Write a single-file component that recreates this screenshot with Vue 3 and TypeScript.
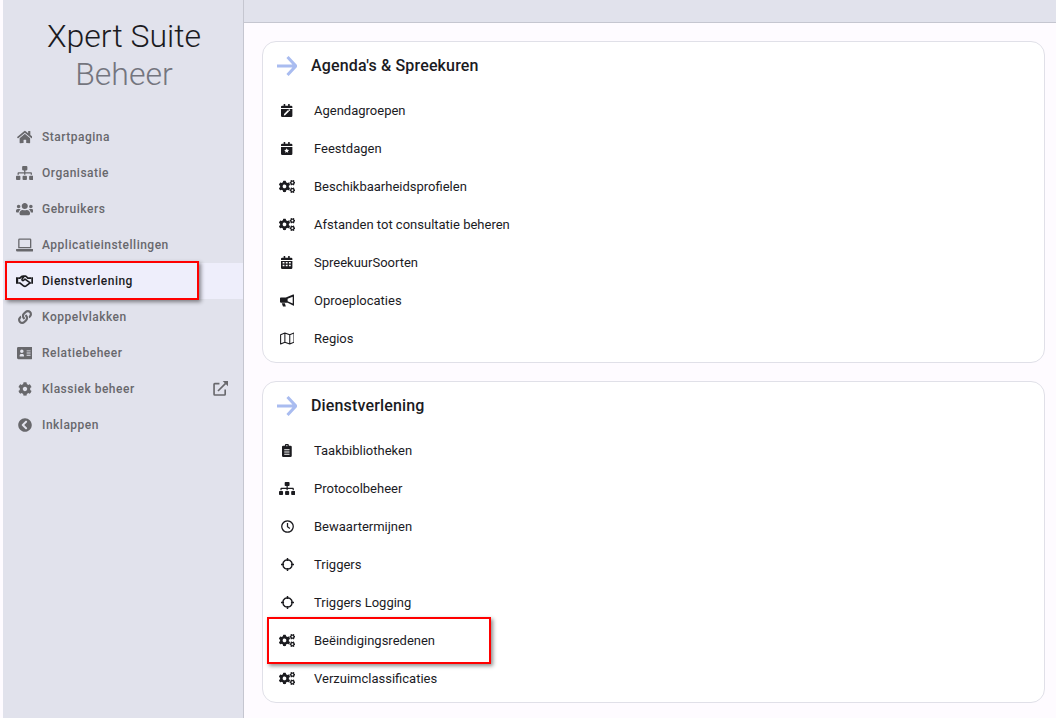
<script setup lang="ts">
interface Icon { w: number; d?: string; s?: string; sw?: number }

const cogs = 'M512.1 191l-8.2 14.3c-3 5.3-9.4 7.5-15.1 5.4-11.8-4.4-22.6-10.7-32.1-18.6-4.6-3.8-5.8-10.5-2.8-15.7l8.2-14.3c-6.9-8-12.3-17.3-15.9-27.4h-16.5c-6 0-11.2-4.3-12.2-10.3-2-12-2.1-24.6 0-37.1 1-6 6.2-10.4 12.2-10.4h16.5c3.6-10.1 9-19.4 15.9-27.4l-8.2-14.3c-3-5.2-1.9-11.9 2.8-15.7 9.5-7.9 20.4-14.2 32.1-18.6 5.7-2.1 12.1.1 15.1 5.4l8.2 14.3c10.5-1.9 21.2-1.9 31.7 0L552 6.3c3-5.3 9.4-7.5 15.1-5.4 11.8 4.4 22.6 10.7 32.1 18.6 4.6 3.8 5.8 10.5 2.8 15.7l-8.2 14.3c6.9 8 12.3 17.3 15.9 27.4h16.5c6 0 11.2 4.3 12.2 10.3 2 12 2.1 24.6 0 37.1-1 6-6.2 10.4-12.2 10.4h-16.5c-3.6 10.1-9 19.4-15.9 27.4l8.2 14.3c3 5.2 1.9 11.9-2.8 15.7-9.5 7.9-20.4 14.2-32.1 18.6-5.7 2.1-12.1-.1-15.1-5.4l-8.2-14.3c-10.4 1.9-21.2 1.9-31.7 0zm-10.5-58.8c38.5 29.6 82.4-14.3 52.8-52.8-38.5-29.7-82.4 14.3-52.8 52.8zM386.3 286.1l33.7 16.8c10.1 5.8 14.5 18.1 10.5 29.1-8.9 24.2-26.4 46.4-42.6 65.8-7.4 8.9-20.2 11.1-30.3 5.3l-29.1-16.8c-16 13.7-34.6 24.6-54.9 31.7v33.6c0 11.6-8.3 21.6-19.7 23.6-24.6 4.2-50.4 4.4-75.9 0-11.5-2-20-11.9-20-23.6V418c-20.3-7.2-38.9-18-54.9-31.7L74 403c-10 5.8-22.9 3.6-30.3-5.3-16.2-19.4-33.3-41.6-42.2-65.7-4-10.9.4-23.2 10.5-29.1l33.3-16.8c-3.9-20.9-3.9-42.4 0-63.4L12 205.8c-10.1-5.8-14.6-18.1-10.5-29 8.9-24.2 26-46.4 42.2-65.8 7.4-8.9 20.2-11.1 30.3-5.3l29.1 16.8c16-13.7 34.6-24.6 54.9-31.7V57.1c0-11.5 8.2-21.5 19.6-23.5 24.6-4.2 50.5-4.4 76-.1 11.5 2 20 11.9 20 23.6v33.6c20.3 7.2 38.9 18 54.9 31.7l29.1-16.8c10-5.8 22.9-3.6 30.3 5.3 16.2 19.4 33.2 41.6 42.1 65.8 4 10.9.1 23.2-10 29.1l-33.7 16.8c3.9 21 3.9 42.5 0 63.5zm-117.6 21.1c59.2-77-28.7-164.9-105.7-105.7-59.2 77 28.7 164.9 105.7 105.7zm243.4 182.7l-8.2 14.3c-3 5.3-9.4 7.5-15.1 5.4-11.8-4.4-22.6-10.7-32.1-18.6-4.6-3.8-5.8-10.5-2.8-15.7l8.2-14.3c-6.9-8-12.3-17.3-15.9-27.4h-16.5c-6 0-11.2-4.3-12.2-10.3-2-12-2.1-24.6 0-37.1 1-6 6.2-10.4 12.2-10.4h16.5c3.6-10.1 9-19.4 15.9-27.4l-8.2-14.3c-3-5.2-1.9-11.9 2.8-15.7 9.5-7.9 20.4-14.2 32.1-18.6 5.7-2.1 12.1.1 15.1 5.4l8.2 14.3c10.5-1.9 21.2-1.9 31.7 0l8.2-14.3c3-5.3 9.4-7.5 15.1-5.4 11.8 4.4 22.6 10.7 32.1 18.6 4.6 3.8 5.8 10.5 2.8 15.7l-8.2 14.3c6.9 8 12.3 17.3 15.9 27.4h16.5c6 0 11.2 4.3 12.2 10.3 2 12 2.1 24.6 0 37.1-1 6-6.2 10.4-12.2 10.4h-16.5c-3.6 10.1-9 19.4-15.9 27.4l8.2 14.3c3 5.2 1.9 11.9-2.8 15.7-9.5 7.9-20.4 14.2-32.1 18.6-5.7 2.1-12.1-.1-15.1-5.4l-8.2-14.3c-10.4 1.9-21.2 1.9-31.7 0zM501.6 431c38.5 29.6 82.4-14.3 52.8-52.8-38.5-29.6-82.4 14.3-52.8 52.8z'
const sitemap = 'M128 352H32c-17.67 0-32 14.33-32 32v96c0 17.67 14.33 32 32 32h96c17.67 0 32-14.33 32-32v-96c0-17.67-14.33-32-32-32zm-24-80h192v48h48v-48h192v48h48v-57.59c0-21.17-17.23-38.41-38.41-38.41H344v-64h40c17.67 0 32-14.33 32-32V32c0-17.67-14.33-32-32-32H256c-17.67 0-32 14.33-32 32v96c0 17.67 14.33 32 32 32h40v64H94.41C73.23 224 56 241.23 56 262.41V320h48v-48zm264 80h-96c-17.67 0-32 14.33-32 32v96c0 17.67 14.33 32 32 32h96c17.67 0 32-14.33 32-32v-96c0-17.67-14.33-32-32-32zm240 0h-96c-17.67 0-32 14.33-32 32v96c0 17.67 14.33 32 32 32h96c17.67 0 32-14.33 32-32v-96c0-17.67-14.33-32-32-32z'
const calTop = 'M112 0h48a8 8 0 0 1 8 8v56h112V8a8 8 0 0 1 8-8h48a8 8 0 0 1 8 8v56h56a48 48 0 0 1 48 48v48H0v-48a48 48 0 0 1 48-48h56V8a8 8 0 0 1 8-8z'

const icons: Record<string, Icon> = {
  home: { w: 576, d: 'M280.37 148.26L96 300.11V464a16 16 0 0 0 16 16l112.06-.29a16 16 0 0 0 15.92-16V368a16 16 0 0 1 16-16h64a16 16 0 0 1 16 16v95.64a16 16 0 0 0 16 16.05L464 480a16 16 0 0 0 16-16V300L295.67 148.26a12.19 12.19 0 0 0-15.3 0zM571.6 251.47L488 182.56V44.05a12 12 0 0 0-12-12h-56a12 12 0 0 0-12 12v72.61L318.47 43a48 48 0 0 0-61 0L4.34 251.47a12 12 0 0 0-1.6 16.9l25.5 31A12 12 0 0 0 45.15 301l235.22-193.74a12.19 12.19 0 0 1 15.3 0L530.9 301a12 12 0 0 0 16.9-1.6l25.5-31a12 12 0 0 0-1.7-16.93z' },
  sitemap: { w: 640, d: sitemap },
  users: { w: 640, d: 'M96 224c35.3 0 64-28.7 64-64s-28.7-64-64-64-64 28.7-64 64 28.7 64 64 64zm448 0c35.3 0 64-28.7 64-64s-28.7-64-64-64-64 28.7-64 64 28.7 64 64 64zm32 32h-64c-17.6 0-33.5 7.1-45.1 18.6 40.3 22.1 68.9 62 75.1 109.4h66c17.7 0 32-14.3 32-32v-32c0-35.3-28.7-64-64-64zm-256 0c61.9 0 112-50.1 112-112S381.9 32 320 32 208 82.1 208 144s50.1 112 112 112zm76.8 32h-8.3c-20.8 10-43.9 16-68.5 16s-47.6-6-68.5-16h-8.3C179.6 288 128 339.6 128 403.2V432c0 26.5 21.5 48 48 48h288c26.5 0 48-21.5 48-48v-28.8c0-63.6-51.6-115.2-115.2-115.2zm-223.7-13.4C161.5 263.1 145.6 256 128 256H64c-35.3 0-64 28.7-64 64v32c0 17.7 14.3 32 32 32h65.9c6.3-47.4 34.9-87.3 75.2-109.4z' },
  laptop: { w: 640, d: 'M128 16h384a48 48 0 0 1 48 48v312H80V64a48 48 0 0 1 48-48zm0 48v264h384V64zM16 400h608a16 16 0 0 1 16 16v32a48 48 0 0 1-48 48H48a48 48 0 0 1-48-48v-32a16 16 0 0 1 16-16z' },
  handshake: { w: 640, d: 'M0 120h64a16 16 0 0 1 16 16v208a16 16 0 0 1-16 16H0zM576 120h64v240h-64a16 16 0 0 1-16-16V136a16 16 0 0 1 16-16z', s: 'M80 150h70q50-70 110-70h84a50 50 0 0 1 36 12l44 58h136M560 330h-56l-134 106q-40 28-84 4L150 330H80M296 84l-76 104q-14 40 20 52 34 10 56-24l34-30 176 130', sw: 60 },
  link: { w: 512, d: 'M326.612 185.391c59.747 59.809 58.927 155.698.36 214.59-.11.12-.24.25-.36.37l-67.2 67.2c-59.27 59.27-155.699 59.262-214.96 0-59.27-59.26-59.27-155.7 0-214.96l37.106-37.106c9.84-9.84 26.786-3.3 27.294 10.606.648 17.722 3.826 35.527 9.69 52.721 1.986 5.822.567 12.262-3.783 16.612l-13.087 13.087c-28.026 28.026-28.905 73.66-1.155 101.96 28.024 28.579 74.086 28.749 102.325.51l67.2-67.19c28.191-28.191 28.073-73.757 0-101.83-3.701-3.694-7.429-6.564-10.341-8.569a16.037 16.037 0 0 1-6.947-12.606c-.396-10.567 3.348-21.456 11.698-29.806l21.054-21.055c5.521-5.521 14.182-6.199 20.584-1.731a152.482 152.482 0 0 1 20.522 17.197zM467.547 44.449c-59.261-59.262-155.69-59.27-214.96 0l-67.2 67.2c-.12.12-.25.25-.36.37-58.566 58.892-59.387 154.781.36 214.59a152.454 152.454 0 0 0 20.521 17.196c6.402 4.468 15.064 3.789 20.584-1.731l21.054-21.055c8.35-8.35 12.094-19.239 11.698-29.806a16.037 16.037 0 0 0-6.947-12.606c-2.912-2.005-6.64-4.875-10.341-8.569-28.073-28.073-28.191-73.639 0-101.83l67.2-67.19c28.239-28.239 74.3-28.069 102.325.51 27.75 28.3 26.872 73.934-1.155 101.96l-13.087 13.087c-4.35 4.35-5.769 10.79-3.783 16.612 5.864 17.194 9.042 34.999 9.69 52.721.509 13.906 17.454 20.446 27.294 10.606l37.106-37.106c59.271-59.259 59.271-155.699.001-214.959z' },
  card: { w: 576, d: 'M48 32h480a48 48 0 0 1 48 48v352a48 48 0 0 1-48 48H48a48 48 0 0 1-48-48V80a48 48 0 0 1 48-48zm128 96a64 64 0 1 0 0 128 64 64 0 0 0 0-128zM96 372c0 10 8 12 16 12h128c8 0 16-2 16-12v-20c0-32-26-56-58-56h-44c-32 0-58 24-58 56zm256-212v32h144v-32zm0 80v32h144v-32zm0 80v32h144v-32z' },
  cog: { w: 512, d: 'M487.4 315.7l-42.6-24.6c4.3-23.2 4.3-47 0-70.2l42.6-24.6c4.9-2.8 7.1-8.6 5.5-14-11.1-35.6-30-67.8-54.7-94.6-3.8-4.1-10-5.1-14.8-2.3L380.8 110c-17.9-15.4-38.5-27.3-60.8-35.1V25.8c0-5.6-3.9-10.5-9.4-11.7-36.7-8.2-74.3-7.8-109.2 0-5.5 1.2-9.4 6.1-9.4 11.7V75c-22.2 7.9-42.8 19.8-60.8 35.1L88.7 85.5c-4.9-2.8-11-1.9-14.8 2.3-24.7 26.7-43.6 58.9-54.7 94.6-1.7 5.4.6 11.2 5.5 14L67.3 221c-4.3 23.2-4.3 47 0 70.2l-42.6 24.6c-4.9 2.8-7.1 8.6-5.5 14 11.1 35.6 30 67.8 54.7 94.6 3.8 4.1 10 5.1 14.8 2.3l42.6-24.6c17.9 15.4 38.5 27.3 60.8 35.1v49.2c0 5.6 3.9 10.5 9.4 11.7 36.7 8.2 74.3 7.8 109.2 0 5.5-1.2 9.4-6.1 9.4-11.7v-49.2c22.2-7.9 42.8-19.8 60.8-35.1l42.6 24.6c4.9 2.8 11 1.9 14.8-2.3 24.7-26.7 43.6-58.9 54.7-94.6 1.5-5.5-.7-11.3-5.6-14.1zM256 336c-44.1 0-80-35.9-80-80s35.9-80 80-80 80 35.9 80 80-35.9 80-80 80z' },
  back: { w: 512, d: 'M256 504C119 504 8 393 8 256S119 8 256 8s248 111 248 248-111 248-248 248zM142.1 273l135.5 135.5c9.4 9.4 24.6 9.4 33.9 0l17-17c9.4-9.4 9.4-24.6 0-33.9L226.9 256l101.6-101.6c9.4-9.4 9.4-24.6 0-33.9l-17-17c-9.4-9.4-24.6-9.4-33.9 0L142.1 239c-9.4 9.4-9.4 24.6 0 34z' },
  external: { w: 512, d: 'M330 0H512V182Z', s: 'M220 90H60a24 24 0 0 0-24 24V452a24 24 0 0 0 24 24H392a24 24 0 0 0 24-24V290M170 342L430 82', sw: 56 },
  calEdit: { w: 448, d: calTop + 'M0 192h448v272a48 48 0 0 1-48 48H48a48 48 0 0 1-48-48zm276 48L120 396l-8 52 52-8 156-156zm16-8l44 44 22-22a14 14 0 0 0 0-20l-24-24a14 14 0 0 0-20 0z' },
  calStar: { w: 448, d: calTop + 'M0 192h448v272a48 48 0 0 1-48 48H48a48 48 0 0 1-48-48zm224 52l-30 60-66 10 48 46-12 66 60-32 60 32-12-66 48-46-66-10z' },
  calendar: { w: 448, d: calTop + 'M0 192h448v272a48 48 0 0 1-48 48H48a48 48 0 0 1-48-48zm64 48v56h72v-56zm124 0v56h72v-56zm124 0v56h72v-56zM64 344v56h72v-56zm124 0v56h72v-56zm124 0v56h72v-56z' },
  bullhorn: { w: 576, d: 'M30 140H230L516 24a24 24 0 0 1 40 18V176a52 52 0 0 1 0 128V438a24 24 0 0 1-40 18L300 340H30A30 30 0 0 1 0 310V170a30 30 0 0 1 30-30zM300 190V290L500 374V106zM70 360H190L225 472a16 16 0 0 1-16 20H130a16 16 0 0 1-16-12Z' },
  map: { w: 576, s: 'M24 110 L192 40 L384 110 L552 40 V400 L384 470 L192 400 L24 470 Z M192 40 V400 M384 110 V470', sw: 42 },
  clipboard: { w: 384, d: 'M48 64h64a80 80 0 0 1 160 0h64a48 48 0 0 1 48 48v352a48 48 0 0 1-48 48H48a48 48 0 0 1-48-48V112a48 48 0 0 1 48-48zm144-24a24 24 0 1 0 0 48 24 24 0 0 0 0-48zM88 208v40h208v-40zm0 88v40h208v-40zm0 88v40h208v-40z' },
  clock: { w: 512, s: 'M256 32a224 224 0 1 0 .1 0zM256 120V270L350 336', sw: 50 },
  crosshairs: { w: 512, s: 'M256 70a186 186 0 1 0 .1 0zM256 0V120M256 392V512M0 256H120M392 256H512', sw: 58 },
  cogs: { w: 640, d: cogs }
}

const nav = [
  { label: 'Startpagina', icon: 'home' },
  { label: 'Organisatie', icon: 'sitemap' },
  { label: 'Gebruikers', icon: 'users' },
  { label: 'Applicatieinstellingen', icon: 'laptop' },
  { label: 'Dienstverlening', icon: 'handshake', active: true },
  { label: 'Koppelvlakken', icon: 'link' },
  { label: 'Relatiebeheer', icon: 'card' },
  { label: 'Klassiek beheer', icon: 'cog', external: true },
  { label: 'Inklappen', icon: 'back' }
]

const sections = [
  {
    title: "Agenda's & Spreekuren",
    items: [
      { label: 'Agendagroepen', icon: 'calEdit' },
      { label: 'Feestdagen', icon: 'calStar' },
      { label: 'Beschikbaarheidsprofielen', icon: 'cogs' },
      { label: 'Afstanden tot consultatie beheren', icon: 'cogs' },
      { label: 'SpreekuurSoorten', icon: 'calendar' },
      { label: 'Oproeplocaties', icon: 'bullhorn' },
      { label: 'Regios', icon: 'map' }
    ]
  },
  {
    title: 'Dienstverlening',
    items: [
      { label: 'Taakbibliotheken', icon: 'clipboard' },
      { label: 'Protocolbeheer', icon: 'sitemap' },
      { label: 'Bewaartermijnen', icon: 'clock' },
      { label: 'Triggers', icon: 'crosshairs' },
      { label: 'Triggers Logging', icon: 'crosshairs' },
      { label: 'Beëindigingsredenen', icon: 'cogs', marked: true },
      { label: 'Verzuimclassificaties', icon: 'cogs' }
    ]
  }
]
</script>

<template>
  <div class="page">
    <aside class="sidebar">
      <div class="brand">
        <div class="brand-main">Xpert Suite</div>
        <div class="brand-sub">Beheer</div>
      </div>
      <nav class="nav">
        <div v-for="n in nav" :key="n.label" class="nav-row" :class="{ active: n.active }">
          <span class="nav-icon">
            <svg :viewBox="`0 0 ${icons[n.icon].w} 512`" :style="{ width: (icons[n.icon].w / 512) * 14 + 'px' }" class="svg-14">
              <path v-if="icons[n.icon].d" :d="icons[n.icon].d" fill="currentColor" fill-rule="evenodd" />
              <path v-if="icons[n.icon].s" :d="icons[n.icon].s" fill="none" stroke="currentColor" :stroke-width="icons[n.icon].sw" stroke-linejoin="round" />
            </svg>
          </span>
          <span class="nav-label">{{ n.label }}</span>
          <svg v-if="n.external" class="ext" viewBox="0 0 512 512">
            <path :d="icons.external.d" fill="currentColor" />
            <path :d="icons.external.s" fill="none" stroke="currentColor" :stroke-width="icons.external.sw" />
          </svg>
          <div v-if="n.active" class="mark mark-nav"></div>
        </div>
      </nav>
    </aside>
    <div class="main">
      <div class="topbar"></div>
      <div class="content">
        <section v-for="s in sections" :key="s.title" class="card">
          <header class="card-head">
            <svg class="arrow" viewBox="0 0 20 20">
              <path d="M0 10H18M10.5 1L18.8 10L10.5 19" fill="none" stroke="#a9bcf0" stroke-width="3" />
            </svg>
            <h2 class="card-title">{{ s.title }}</h2>
          </header>
          <div v-for="i in s.items" :key="i.label" class="item">
            <span class="item-icon">
              <svg :viewBox="`0 0 ${icons[i.icon].w} 512`" :style="{ width: (icons[i.icon].w / 512) * 13 + 'px' }" class="svg-13">
                <path v-if="icons[i.icon].d" :d="icons[i.icon].d" fill="currentColor" fill-rule="evenodd" />
                <path v-if="icons[i.icon].s" :d="icons[i.icon].s" fill="none" stroke="currentColor" :stroke-width="icons[i.icon].sw" stroke-linejoin="round" />
              </svg>
            </span>
            <span class="item-label">{{ i.label }}</span>
            <div v-if="i.marked" class="mark mark-item"></div>
          </div>
        </section>
      </div>
    </div>
  </div>
</template>

<style>
html, body { margin: 0; background: #fefbff; }
</style>

<style scoped>
.page {
  display: flex;
  height: 718px;
  overflow: hidden;
  padding-left: 3px;
  box-sizing: border-box;
  background: #fefbff;
  font-family: Roboto, "Liberation Sans", sans-serif;
  color: #1b1b1f;
}
.sidebar {
  width: 240px;
  flex: none;
  background: #e1e2ec;
  border-right: 1px solid #c5c6d0;
}
.brand {
  padding: 17px 0 0 2px;
  text-align: center;
  font-size: 32px;
  font-weight: 300;
  line-height: 38px;
  height: 102px;
}
.brand-main { color: #1b1b1f; }
.brand-sub { color: #74757e; }
.nav { display: flex; flex-direction: column; }
.nav-row {
  position: relative;
  display: flex;
  align-items: center;
  height: 36px;
  color: #68686c;
  font-size: 12px;
  font-weight: 500;
  letter-spacing: 0.5px;
}
.nav-row.active { background: #eeeefb; color: #1b1b1f; }
.nav-icon {
  width: 39px;
  display: flex;
  justify-content: center;
  flex: none;
  padding-left: 4px;
  box-sizing: border-box;
}
.svg-14 { height: 14px; display: block; }
.svg-13 { height: 13px; display: block; }
.ext { position: absolute; left: 210px; top: 10px; width: 15px; height: 15px; }
.main { flex: 1; min-width: 0; display: flex; flex-direction: column; }
.topbar { height: 22px; flex: none; background: #e1e2ec; border-bottom: 1px solid #c5c6d0; }
.content { padding: 18px 11px 0 18px; display: flex; flex-direction: column; gap: 18px; }
.card {
  background: #fff;
  border: 1px solid #e0e0e8;
  border-radius: 14px;
  padding-bottom: 5px;
}
.card-head { display: flex; align-items: center; height: 46px; padding: 0 0 3px 14px; }
.arrow { width: 20px; height: 20px; flex: none; margin-top: 2px; }
.card-title { margin: 0 0 0 14px; font-size: 16px; font-weight: 500; letter-spacing: 0.15px; }
.item { position: relative; display: flex; align-items: center; height: 38px; font-size: 13px; }
.item-icon { width: 48px; margin-right: 3px; display: flex; justify-content: center; flex: none; }
.mark {
  position: absolute;
  border: 2px solid #f00;
  box-sizing: border-box;
  box-shadow: 2px 2px 4px rgba(0, 0, 0, 0.45);
  pointer-events: none;
}
.mark-nav { left: 2px; top: -2px; width: 194px; height: 39px; }
.mark-item { left: 4px; top: -4px; width: 224px; height: 47px; }
</style>
